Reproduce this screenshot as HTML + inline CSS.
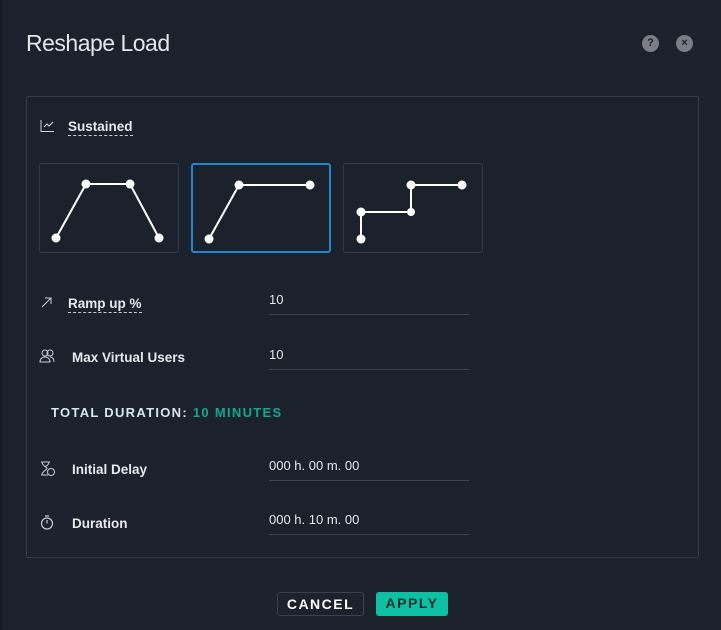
<!DOCTYPE html>
<html><head><style>
*{margin:0;padding:0;box-sizing:border-box}
body{width:721px;height:630px;background:#1b222c;font-family:"Liberation Sans",sans-serif;color:#e6e8ea;position:relative;overflow:hidden}
.a{position:absolute}
.title{left:26px;top:30px;font-size:23px;font-weight:300;color:#e3e6e9;letter-spacing:-0.5px}
.ic{width:17px;height:17px;border-radius:50%;background:#7a7e84;color:#1b222c;font-size:11px;font-weight:bold;text-align:center;line-height:17px}
.panel{left:26px;top:96px;width:673px;height:462px;border:1px solid #2f3d4c;border-radius:2px}
.card{width:140px;height:90px;border:1px solid #2f3d4c;border-radius:3px;top:163px}
.lbl{font-size:13.5px;font-weight:bold;color:#e6e8ea}
.dash{border-bottom:1px dashed #c9ccd0;padding-bottom:1px}
.inp{left:269px;width:200px;border-bottom:1px solid #3a4654;font-size:13px;height:23px;color:#e6e8ea}
.btn{top:592px;height:24px;border-radius:3px;font-size:14px;font-weight:bold;letter-spacing:1.5px;text-align:center;line-height:23px}
</style></head><body>
<div class="a" style="left:0;top:0;width:2px;height:630px;background:#151a21"></div>
<div class="a title">Reshape Load</div>
<div class="a ic" style="left:642px;top:35px">?</div>
<div class="a ic" style="left:676px;top:35px">×</div>
<div class="a panel"></div>
<svg class="a" style="left:40px;top:119px" width="15" height="14" fill="none" stroke="#d0d3d6" stroke-width="1"><path d="M1 1V12.5H14M4 8l3-3 2 2 4-4"/></svg>
<div class="a lbl dash" style="left:68px;top:119px">Sustained</div>
<div class="a card" style="left:39px"></div>
<div class="a card" style="left:191px;border:2px solid #1f86d6"></div>
<div class="a card" style="left:343px"></div>
<svg class="a" style="left:0;top:0" width="721" height="300" fill="#fff" stroke="#fff" stroke-width="2">
<polyline fill="none" points="56,238 86,184 130,184 159,238"/>
<circle cx="56" cy="238" r="3.5"/><circle cx="86" cy="184" r="3.5"/><circle cx="130" cy="184" r="3.5"/><circle cx="159" cy="238" r="3.5"/>
<polyline fill="none" points="209,239 239,185 310,185"/>
<circle cx="209" cy="239" r="3.5"/><circle cx="239" cy="185" r="3.5"/><circle cx="310" cy="185" r="3.5"/>
<polyline fill="none" points="361,239 361,212 411,212 411,185 462,185"/>
<circle cx="361" cy="239" r="3.5"/><circle cx="361" cy="212" r="3.5"/><circle cx="411" cy="212" r="3"/><circle cx="411" cy="185" r="3.5"/><circle cx="462" cy="185" r="3.5"/>
</svg>
<svg class="a" style="left:41px;top:296px" width="12" height="12" fill="none" stroke="#c9ccd0" stroke-width="1"><path d="M1 11L10 2M4 2h6v6"/></svg>
<div class="a lbl dash" style="left:68px;top:296px">Ramp up %</div>
<div class="a inp" style="top:292px">10</div>
<svg class="a" style="left:39px;top:349px" width="16" height="14" fill="none" stroke="#c9ccd0" stroke-width="1"><circle cx="6" cy="4" r="3"/><circle cx="11" cy="4" r="3"/><path d="M1 13c0-3 2-5 5-5s5 2 5 5zM11 8c3 0 4 2 4 5"/></svg>
<div class="a lbl" style="left:72px;top:350px">Max Virtual Users</div>
<div class="a inp" style="top:347px">10</div>
<div class="a" style="left:51px;top:405px;font-size:13px;font-weight:bold;letter-spacing:1.3px;color:#d8e6f0">TOTAL DURATION: <span style="color:#14a88f">10 MINUTES</span></div>
<svg class="a" style="left:40px;top:461px" width="16" height="15" fill="none" stroke="#c9ccd0" stroke-width="1"><path d="M1 1h9M1 14h7M2 1c0 4 5 5 5 6.5S2 10 2 14M9 1c0 3-3 4-4 5"/><circle cx="11" cy="11" r="3.5"/></svg>
<div class="a lbl" style="left:72px;top:462px">Initial Delay</div>
<div class="a inp" style="top:458px">000 h. 00 m. 00</div>
<svg class="a" style="left:40px;top:515px" width="14" height="15" fill="none" stroke="#c9ccd0" stroke-width="1.2"><circle cx="7" cy="8.5" r="5.5"/><path d="M5 1h4M7 8.5V5"/></svg>
<div class="a lbl" style="left:72px;top:516px">Duration</div>
<div class="a inp" style="top:512px">000 h. 10 m. 00</div>
<div class="a btn" style="left:277px;width:87px;border:1px solid #3a4250;color:#fff">CANCEL</div>
<div class="a btn" style="left:376px;width:72px;background:#0fbfa3;color:#12302e">APPLY</div>
</body></html>
